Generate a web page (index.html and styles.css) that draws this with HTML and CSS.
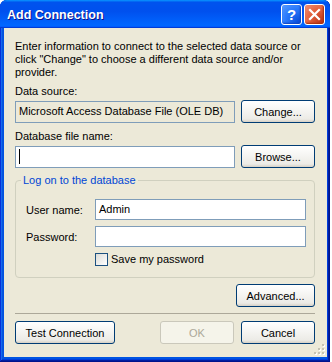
FILE: index.html
```html
<!DOCTYPE html>
<html lang="en">

<head>
  <meta charset="UTF-8">
  <meta name="viewport" content="width=device-width, initial-scale=1.0">
  <title>Add Connection</title>
  <link rel="stylesheet" href="styles.css">
</head>

<body>
  <div class="window">
    <div class="title-bar">
      <span class="title">Add Connection</span>
      <div class="title-buttons">
        <button class="tb-btn help">?</button>
        <button class="tb-btn close">
          <svg width="13" height="13" viewBox="0 0 13 13">
            <path d="M2 2 L11 11 M11 2 L2 11" stroke="#fff" stroke-width="2.2" stroke-linecap="square" fill="none" />
          </svg>
        </button>
      </div>
    </div>

    <div class="window-body">
      <p class="intro">Enter information to connect to the selected data source or<br>click "Change" to choose a different data source and/or<br>provider.</p>

      <div class="label">Data source:</div>
      <div class="row">
        <div class="field readonly">Microsoft Access Database File (OLE DB)</div>
        <button class="btn">Change...</button>
      </div>

      <div class="label">Database file name:</div>
      <div class="row">
        <div class="field"><span class="caret"></span></div>
        <button class="btn">Browse...</button>
      </div>

      <fieldset class="group">
        <legend>Log on to the database</legend>
        <div class="login-grid">
          <span class="login-label">User name:</span>
          <div class="field small">Admin</div>
          <span class="login-label">Password:</span>
          <div class="field small"></div>
          <span></span>
          <label class="check">
            <span class="box"></span>
            Save my password
          </label>
        </div>
      </fieldset>

      <div class="advanced-row">
        <button class="btn wide">Advanced...</button>
      </div>

      <div class="separator"></div>

      <div class="footer">
        <button class="btn test">Test Connection</button>
        <div class="footer-right">
          <button class="btn" disabled>OK</button>
          <button class="btn">Cancel</button>
        </div>
      </div>

      <svg class="grip" width="12" height="12" viewBox="0 0 12 12">
        <g fill="#fff">
          <rect x="9" y="1" width="2" height="2" />
          <rect x="5" y="5" width="2" height="2" />
          <rect x="9" y="5" width="2" height="2" />
          <rect x="1" y="9" width="2" height="2" />
          <rect x="5" y="9" width="2" height="2" />
          <rect x="9" y="9" width="2" height="2" />
        </g>
        <g fill="#c5c2b2">
          <rect x="8" y="0" width="2" height="2" />
          <rect x="4" y="4" width="2" height="2" />
          <rect x="8" y="4" width="2" height="2" />
          <rect x="0" y="8" width="2" height="2" />
          <rect x="4" y="8" width="2" height="2" />
          <rect x="8" y="8" width="2" height="2" />
        </g>
      </svg>
    </div>
  </div>
</body>

</html>
```

FILE: styles.css
```css
* {
  box-sizing: border-box;
  margin: 0;
  padding: 0;
}

body {
  font-family: "Liberation Sans", Arial, sans-serif;
  font-size: 11px;
  background-color: #fff;
  color: #000;
}

.window {
  width: 330px;
  height: 362px;
  display: flex;
  flex-direction: column;
  background-color: #0054e3;
  border-radius: 7px 7px 0 0;
  box-shadow: inset -1px -1px #00138c, inset 1px 1px #0831d9,
    inset -2px -2px #001ea0, inset 2px 2px #166aee,
    inset -3px -3px #003bda, inset 3px 3px #0855dd;
}

.title-bar {
  height: 28px;
  display: flex;
  align-items: center;
  justify-content: space-between;
  padding: 0 5px 0 7px;
  border-radius: 7px 7px 0 0;
  background: linear-gradient(180deg, #0997ff, #0053ee 8%, #0050ee 40%, #06f 88%, #06f 93%, #005bff 95%, #003dd7 96%, #003dd7);
}

.title {
  font-weight: bold;
  font-size: 12.5px;
  color: #fff;
  text-shadow: 1px 1px #0f1089;
  padding-top: 1px;
}

.title-buttons {
  display: flex;
  gap: 2px;
}

.tb-btn {
  width: 21px;
  height: 21px;
  border: 1px solid #fff;
  border-radius: 3px;
  display: flex;
  align-items: center;
  justify-content: center;
  color: #fff;
  font-family: "Liberation Sans", Arial, sans-serif;
  font-weight: bold;
  font-size: 15px;
}

.help {
  background: radial-gradient(circle at 85% 85%, #0a4fdc 0, #2a7afc 55%, #5a9cff 100%);
  box-shadow: inset -1px -1px 2px #0b3fc0;
}

.close {
  background: radial-gradient(circle at 85% 85%, #c0391a 0, #e4633f 55%, #f0937a 100%);
  box-shadow: inset -1px -1px 2px #a22a0c;
}

.window-body {
  flex: 1;
  position: relative;
  margin: 0 3px 5px 4px;
  padding: 12px 12px 0 11px;
  background-color: #ece9d8;
}

.intro {
  line-height: 13px;
}

.label {
  margin-top: 6px;
  line-height: 13px;
}

.row {
  display: flex;
  align-items: center;
  gap: 6px;
  margin-top: 2px;
}

.field {
  flex: 1;
  height: 22px;
  border: 1px solid #7f9db9;
  background-color: #fff;
  padding: 0 3px;
  display: flex;
  align-items: center;
  line-height: 13px;
}

.field.readonly {
  background-color: #ece9d8;
}

.field.small {
  height: 21px;
}

.caret {
  width: 1px;
  height: 15px;
  background-color: #000;
}

.btn {
  width: 74px;
  height: 23px;
  font-family: "Liberation Sans", Arial, sans-serif;
  font-size: 11px;
  color: #000;
  border: 1px solid #003c74;
  border-radius: 3px;
  background: linear-gradient(180deg, #fff, #ecebe6 86%, #d6d0c5);
}

.btn:disabled {
  color: #aca899;
  border-color: #cac8bb;
  background: #f5f4ea;
}

.btn.wide {
  width: 79px;
}

.btn.test {
  width: 100px;
}

.row + .label {
  margin-top: 7px;
}

.group {
  margin-top: 5px;
  border: 1px solid #d0d0bf;
  border-radius: 4px;
  padding: 12px 8px 11px 10px;
}

.group legend {
  color: #0046d5;
  line-height: 14px;
  padding: 0 2px;
  margin-left: -5px;
}

.login-grid {
  display: grid;
  grid-template-columns: 69px 1fr;
  align-items: center;
  row-gap: 6px;
}

.check {
  display: flex;
  align-items: center;
  gap: 3px;
  line-height: 13px;
}

.box {
  width: 13px;
  height: 13px;
  border: 1px solid #1c5180;
  background: linear-gradient(135deg, #dcdcd7, #fff);
}

.advanced-row {
  display: flex;
  justify-content: flex-end;
  margin-top: 6px;
}

.separator {
  height: 1px;
  margin-top: 6px;
  background-color: #aca899;
}

.footer {
  display: flex;
  justify-content: space-between;
  margin-top: 7px;
}

.footer-right {
  display: flex;
  gap: 7px;
}

.grip {
  position: absolute;
  right: 1px;
  bottom: 1px;
}
```
